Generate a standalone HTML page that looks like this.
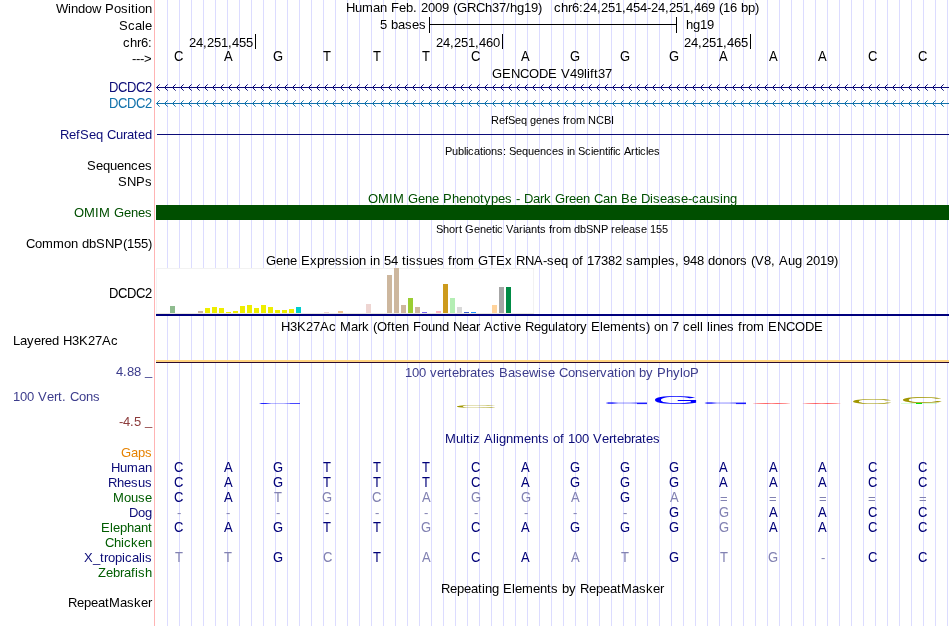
<!DOCTYPE html>
<html><head><meta charset="utf-8"><title>UCSC Genome Browser</title>
<style>html,body{margin:0;padding:0;background:#fff;}body{width:950px;height:626px;overflow:hidden}svg text{white-space:pre}svg{will-change:transform;transform:translateZ(0)}</style>
</head><body>
<svg width="950" height="626" viewBox="0 0 950 626" font-family='"Liberation Sans", Arial, Helvetica, sans-serif' style="display:block">
<defs><linearGradient id="tg"><stop offset="0" stop-color="#00f" stop-opacity=".15"/><stop offset=".06" stop-color="#00f" stop-opacity=".85"/><stop offset=".16" stop-color="#00f" stop-opacity=".85"/><stop offset=".3" stop-color="#00f" stop-opacity=".28"/><stop offset=".6" stop-color="#00f" stop-opacity=".3"/><stop offset=".78" stop-color="#00f" stop-opacity=".55"/><stop offset="1" stop-color="#00f" stop-opacity=".6"/></linearGradient><linearGradient id="tr"><stop offset="0" stop-color="#f00" stop-opacity=".1"/><stop offset=".12" stop-color="#f00" stop-opacity=".4"/><stop offset=".35" stop-color="#f00" stop-opacity=".6"/><stop offset=".5" stop-color="#f00" stop-opacity=".42"/><stop offset=".65" stop-color="#f00" stop-opacity=".6"/><stop offset=".88" stop-color="#f00" stop-opacity=".4"/><stop offset="1" stop-color="#f00" stop-opacity=".1"/></linearGradient></defs>
<path d="M167.5 0V626M179.5 0V626M191.5 0V626M203.5 0V626M215.5 0V626M227.5 0V626M239.5 0V626M251.5 0V626M263.5 0V626M275.5 0V626M287.5 0V626M299.5 0V626M311.5 0V626M323.5 0V626M335.5 0V626M347.5 0V626M359.5 0V626M371.5 0V626M383.5 0V626M395.5 0V626M407.5 0V626M419.5 0V626M431.5 0V626M443.5 0V626M455.5 0V626M467.5 0V626M479.5 0V626M491.5 0V626M503.5 0V626M515.5 0V626M527.5 0V626M539.5 0V626M551.5 0V626M563.5 0V626M575.5 0V626M587.5 0V626M599.5 0V626M611.5 0V626M623.5 0V626M635.5 0V626M647.5 0V626M659.5 0V626M671.5 0V626M683.5 0V626M695.5 0V626M707.5 0V626M719.5 0V626M731.5 0V626M743.5 0V626M755.5 0V626M767.5 0V626M779.5 0V626M791.5 0V626M803.5 0V626M815.5 0V626M827.5 0V626M839.5 0V626M851.5 0V626M863.5 0V626M875.5 0V626M887.5 0V626M899.5 0V626M911.5 0V626M923.5 0V626M935.5 0V626M947.5 0V626" stroke="#dcdcff" stroke-width="1" fill="none"/>
<rect x="154" y="0" width="1" height="626" fill="#ffb4b4"/>
<text x="56 68 71 78 85 92 101 105 114 121 128 131 135 138 145" y="12.5" font-size="13" fill="#000">Window Position</text>
<text x="346 355 362 373 380 387 391 399 406 413 417 421 428 435 442 449 453 457 467 476 485 492 499 506 510 517 524 531 538 542 546 550 554 561 568 572 579 583 590 597 601 608 615 622 626 633 640 647 651 658 665 669 676 683 690 694 701 708 715 719 723 730 737 741 748 755" y="11.5" font-size="13" fill="#000" xml:space="preserve">Human Feb. 2009 (GRCh37/hg19)   chr6:24,251,454-24,251,469 (16 bp)</text>
<text x="119 128 135 142 145" y="29.5" font-size="13" fill="#000">Scale</text>
<text x="380 387 391 398 405 412 419" y="28.5" font-size="13" fill="#000">5 bases</text>
<text x="686 693 700 707" y="28.5" font-size="13" fill="#000">hg19</text>
<rect x="429" y="17" width="1" height="16" fill="#000"/>
<rect x="676" y="17" width="1" height="16" fill="#000"/>
<rect x="429" y="24" width="248" height="1" fill="#000"/>
<text x="123 130 137 141 148" y="46.5" font-size="13" fill="#000">chr6:</text>
<rect x="255" y="34" width="1" height="15" fill="#000"/>
<text x="189 196 203 207 214 221 228 232 239 246" y="46.5" font-size="13" fill="#000">24,251,455</text>
<rect x="502" y="34" width="1" height="15" fill="#000"/>
<text x="436 443 450 454 461 468 475 479 486 493" y="46.5" font-size="13" fill="#000">24,251,460</text>
<rect x="750" y="34" width="1" height="15" fill="#000"/>
<text x="684 691 698 702 709 716 723 727 734 741" y="46.5" font-size="13" fill="#000">24,251,465</text>
<text x="132 136 140 144" y="63" font-size="13" fill="#000">---&gt;</text>
<text x="174" y="0" transform="translate(0 61) scale(1 1.06)" font-size="13" fill="#000">C</text>
<text x="224" y="0" transform="translate(0 61) scale(1 1.06)" font-size="13" fill="#000">A</text>
<text x="273" y="0" transform="translate(0 61) scale(1 1.06)" font-size="13" fill="#000">G</text>
<text x="323" y="0" transform="translate(0 61) scale(1 1.06)" font-size="13" fill="#000">T</text>
<text x="373" y="0" transform="translate(0 61) scale(1 1.06)" font-size="13" fill="#000">T</text>
<text x="422" y="0" transform="translate(0 61) scale(1 1.06)" font-size="13" fill="#000">T</text>
<text x="471" y="0" transform="translate(0 61) scale(1 1.06)" font-size="13" fill="#000">C</text>
<text x="521" y="0" transform="translate(0 61) scale(1 1.06)" font-size="13" fill="#000">A</text>
<text x="570" y="0" transform="translate(0 61) scale(1 1.06)" font-size="13" fill="#000">G</text>
<text x="620" y="0" transform="translate(0 61) scale(1 1.06)" font-size="13" fill="#000">G</text>
<text x="669" y="0" transform="translate(0 61) scale(1 1.06)" font-size="13" fill="#000">G</text>
<text x="719" y="0" transform="translate(0 61) scale(1 1.06)" font-size="13" fill="#000">A</text>
<text x="769" y="0" transform="translate(0 61) scale(1 1.06)" font-size="13" fill="#000">A</text>
<text x="818" y="0" transform="translate(0 61) scale(1 1.06)" font-size="13" fill="#000">A</text>
<text x="868" y="0" transform="translate(0 61) scale(1 1.06)" font-size="13" fill="#000">C</text>
<text x="918" y="0" transform="translate(0 61) scale(1 1.06)" font-size="13" fill="#000">C</text>
<text x="492 502 511 520 529 539 548 557 561 570 577 584 587 590 594 598 605" y="77.5" font-size="13" fill="#000">GENCODE V49lift37</text>
<text x="109 118 127 136 145" y="0" transform="translate(0 92) scale(1 1.06)" font-size="13" fill="#0c0c78">DCDC2</text>
<path d="M156.6 87.5H949" stroke="#0c0c78" stroke-width="1" fill="none"/>
<path d="M159.65 84.35L156.5 87.5L159.65 90.65M167.65 84.35L164.5 87.5L167.65 90.65M175.65 84.35L172.5 87.5L175.65 90.65M183.65 84.35L180.5 87.5L183.65 90.65M191.65 84.35L188.5 87.5L191.65 90.65M199.65 84.35L196.5 87.5L199.65 90.65M207.65 84.35L204.5 87.5L207.65 90.65M215.65 84.35L212.5 87.5L215.65 90.65M223.65 84.35L220.5 87.5L223.65 90.65M231.65 84.35L228.5 87.5L231.65 90.65M239.65 84.35L236.5 87.5L239.65 90.65M247.65 84.35L244.5 87.5L247.65 90.65M255.65 84.35L252.5 87.5L255.65 90.65M263.65 84.35L260.5 87.5L263.65 90.65M271.65 84.35L268.5 87.5L271.65 90.65M279.65 84.35L276.5 87.5L279.65 90.65M287.65 84.35L284.5 87.5L287.65 90.65M295.65 84.35L292.5 87.5L295.65 90.65M303.65 84.35L300.5 87.5L303.65 90.65M311.65 84.35L308.5 87.5L311.65 90.65M319.65 84.35L316.5 87.5L319.65 90.65M327.65 84.35L324.5 87.5L327.65 90.65M335.65 84.35L332.5 87.5L335.65 90.65M343.65 84.35L340.5 87.5L343.65 90.65M351.65 84.35L348.5 87.5L351.65 90.65M359.65 84.35L356.5 87.5L359.65 90.65M367.65 84.35L364.5 87.5L367.65 90.65M375.65 84.35L372.5 87.5L375.65 90.65M383.65 84.35L380.5 87.5L383.65 90.65M391.65 84.35L388.5 87.5L391.65 90.65M399.65 84.35L396.5 87.5L399.65 90.65M407.65 84.35L404.5 87.5L407.65 90.65M415.65 84.35L412.5 87.5L415.65 90.65M423.65 84.35L420.5 87.5L423.65 90.65M431.65 84.35L428.5 87.5L431.65 90.65M439.65 84.35L436.5 87.5L439.65 90.65M447.65 84.35L444.5 87.5L447.65 90.65M455.65 84.35L452.5 87.5L455.65 90.65M463.65 84.35L460.5 87.5L463.65 90.65M471.65 84.35L468.5 87.5L471.65 90.65M479.65 84.35L476.5 87.5L479.65 90.65M487.65 84.35L484.5 87.5L487.65 90.65M495.65 84.35L492.5 87.5L495.65 90.65M503.65 84.35L500.5 87.5L503.65 90.65M511.65 84.35L508.5 87.5L511.65 90.65M519.65 84.35L516.5 87.5L519.65 90.65M527.65 84.35L524.5 87.5L527.65 90.65M535.65 84.35L532.5 87.5L535.65 90.65M543.65 84.35L540.5 87.5L543.65 90.65M551.65 84.35L548.5 87.5L551.65 90.65M559.65 84.35L556.5 87.5L559.65 90.65M567.65 84.35L564.5 87.5L567.65 90.65M575.65 84.35L572.5 87.5L575.65 90.65M583.65 84.35L580.5 87.5L583.65 90.65M591.65 84.35L588.5 87.5L591.65 90.65M599.65 84.35L596.5 87.5L599.65 90.65M607.65 84.35L604.5 87.5L607.65 90.65M615.65 84.35L612.5 87.5L615.65 90.65M623.65 84.35L620.5 87.5L623.65 90.65M631.65 84.35L628.5 87.5L631.65 90.65M639.65 84.35L636.5 87.5L639.65 90.65M647.65 84.35L644.5 87.5L647.65 90.65M655.65 84.35L652.5 87.5L655.65 90.65M663.65 84.35L660.5 87.5L663.65 90.65M671.65 84.35L668.5 87.5L671.65 90.65M679.65 84.35L676.5 87.5L679.65 90.65M687.65 84.35L684.5 87.5L687.65 90.65M695.65 84.35L692.5 87.5L695.65 90.65M703.65 84.35L700.5 87.5L703.65 90.65M711.65 84.35L708.5 87.5L711.65 90.65M719.65 84.35L716.5 87.5L719.65 90.65M727.65 84.35L724.5 87.5L727.65 90.65M735.65 84.35L732.5 87.5L735.65 90.65M743.65 84.35L740.5 87.5L743.65 90.65M751.65 84.35L748.5 87.5L751.65 90.65M759.65 84.35L756.5 87.5L759.65 90.65M767.65 84.35L764.5 87.5L767.65 90.65M775.65 84.35L772.5 87.5L775.65 90.65M783.65 84.35L780.5 87.5L783.65 90.65M791.65 84.35L788.5 87.5L791.65 90.65M799.65 84.35L796.5 87.5L799.65 90.65M807.65 84.35L804.5 87.5L807.65 90.65M815.65 84.35L812.5 87.5L815.65 90.65M823.65 84.35L820.5 87.5L823.65 90.65M831.65 84.35L828.5 87.5L831.65 90.65M839.65 84.35L836.5 87.5L839.65 90.65M847.65 84.35L844.5 87.5L847.65 90.65M855.65 84.35L852.5 87.5L855.65 90.65M863.65 84.35L860.5 87.5L863.65 90.65M871.65 84.35L868.5 87.5L871.65 90.65M879.65 84.35L876.5 87.5L879.65 90.65M887.65 84.35L884.5 87.5L887.65 90.65M895.65 84.35L892.5 87.5L895.65 90.65M903.65 84.35L900.5 87.5L903.65 90.65M911.65 84.35L908.5 87.5L911.65 90.65M919.65 84.35L916.5 87.5L919.65 90.65M927.65 84.35L924.5 87.5L927.65 90.65M935.65 84.35L932.5 87.5L935.65 90.65M943.65 84.35L940.5 87.5L943.65 90.65" stroke="#0c0c78" stroke-width="1" stroke-linejoin="bevel" fill="none"/>
<text x="109 118 127 136 145" y="0" transform="translate(0 108) scale(1 1.06)" font-size="13" fill="#1272ab">DCDC2</text>
<path d="M156.6 103.5H949" stroke="#1272ab" stroke-width="1" fill="none"/>
<path d="M159.65 100.35L156.5 103.5L159.65 106.65M167.65 100.35L164.5 103.5L167.65 106.65M175.65 100.35L172.5 103.5L175.65 106.65M183.65 100.35L180.5 103.5L183.65 106.65M191.65 100.35L188.5 103.5L191.65 106.65M199.65 100.35L196.5 103.5L199.65 106.65M207.65 100.35L204.5 103.5L207.65 106.65M215.65 100.35L212.5 103.5L215.65 106.65M223.65 100.35L220.5 103.5L223.65 106.65M231.65 100.35L228.5 103.5L231.65 106.65M239.65 100.35L236.5 103.5L239.65 106.65M247.65 100.35L244.5 103.5L247.65 106.65M255.65 100.35L252.5 103.5L255.65 106.65M263.65 100.35L260.5 103.5L263.65 106.65M271.65 100.35L268.5 103.5L271.65 106.65M279.65 100.35L276.5 103.5L279.65 106.65M287.65 100.35L284.5 103.5L287.65 106.65M295.65 100.35L292.5 103.5L295.65 106.65M303.65 100.35L300.5 103.5L303.65 106.65M311.65 100.35L308.5 103.5L311.65 106.65M319.65 100.35L316.5 103.5L319.65 106.65M327.65 100.35L324.5 103.5L327.65 106.65M335.65 100.35L332.5 103.5L335.65 106.65M343.65 100.35L340.5 103.5L343.65 106.65M351.65 100.35L348.5 103.5L351.65 106.65M359.65 100.35L356.5 103.5L359.65 106.65M367.65 100.35L364.5 103.5L367.65 106.65M375.65 100.35L372.5 103.5L375.65 106.65M383.65 100.35L380.5 103.5L383.65 106.65M391.65 100.35L388.5 103.5L391.65 106.65M399.65 100.35L396.5 103.5L399.65 106.65M407.65 100.35L404.5 103.5L407.65 106.65M415.65 100.35L412.5 103.5L415.65 106.65M423.65 100.35L420.5 103.5L423.65 106.65M431.65 100.35L428.5 103.5L431.65 106.65M439.65 100.35L436.5 103.5L439.65 106.65M447.65 100.35L444.5 103.5L447.65 106.65M455.65 100.35L452.5 103.5L455.65 106.65M463.65 100.35L460.5 103.5L463.65 106.65M471.65 100.35L468.5 103.5L471.65 106.65M479.65 100.35L476.5 103.5L479.65 106.65M487.65 100.35L484.5 103.5L487.65 106.65M495.65 100.35L492.5 103.5L495.65 106.65M503.65 100.35L500.5 103.5L503.65 106.65M511.65 100.35L508.5 103.5L511.65 106.65M519.65 100.35L516.5 103.5L519.65 106.65M527.65 100.35L524.5 103.5L527.65 106.65M535.65 100.35L532.5 103.5L535.65 106.65M543.65 100.35L540.5 103.5L543.65 106.65M551.65 100.35L548.5 103.5L551.65 106.65M559.65 100.35L556.5 103.5L559.65 106.65M567.65 100.35L564.5 103.5L567.65 106.65M575.65 100.35L572.5 103.5L575.65 106.65M583.65 100.35L580.5 103.5L583.65 106.65M591.65 100.35L588.5 103.5L591.65 106.65M599.65 100.35L596.5 103.5L599.65 106.65M607.65 100.35L604.5 103.5L607.65 106.65M615.65 100.35L612.5 103.5L615.65 106.65M623.65 100.35L620.5 103.5L623.65 106.65M631.65 100.35L628.5 103.5L631.65 106.65M639.65 100.35L636.5 103.5L639.65 106.65M647.65 100.35L644.5 103.5L647.65 106.65M655.65 100.35L652.5 103.5L655.65 106.65M663.65 100.35L660.5 103.5L663.65 106.65M671.65 100.35L668.5 103.5L671.65 106.65M679.65 100.35L676.5 103.5L679.65 106.65M687.65 100.35L684.5 103.5L687.65 106.65M695.65 100.35L692.5 103.5L695.65 106.65M703.65 100.35L700.5 103.5L703.65 106.65M711.65 100.35L708.5 103.5L711.65 106.65M719.65 100.35L716.5 103.5L719.65 106.65M727.65 100.35L724.5 103.5L727.65 106.65M735.65 100.35L732.5 103.5L735.65 106.65M743.65 100.35L740.5 103.5L743.65 106.65M751.65 100.35L748.5 103.5L751.65 106.65M759.65 100.35L756.5 103.5L759.65 106.65M767.65 100.35L764.5 103.5L767.65 106.65M775.65 100.35L772.5 103.5L775.65 106.65M783.65 100.35L780.5 103.5L783.65 106.65M791.65 100.35L788.5 103.5L791.65 106.65M799.65 100.35L796.5 103.5L799.65 106.65M807.65 100.35L804.5 103.5L807.65 106.65M815.65 100.35L812.5 103.5L815.65 106.65M823.65 100.35L820.5 103.5L823.65 106.65M831.65 100.35L828.5 103.5L831.65 106.65M839.65 100.35L836.5 103.5L839.65 106.65M847.65 100.35L844.5 103.5L847.65 106.65M855.65 100.35L852.5 103.5L855.65 106.65M863.65 100.35L860.5 103.5L863.65 106.65M871.65 100.35L868.5 103.5L871.65 106.65M879.65 100.35L876.5 103.5L879.65 106.65M887.65 100.35L884.5 103.5L887.65 106.65M895.65 100.35L892.5 103.5L895.65 106.65M903.65 100.35L900.5 103.5L903.65 106.65M911.65 100.35L908.5 103.5L911.65 106.65M919.65 100.35L916.5 103.5L919.65 106.65M927.65 100.35L924.5 103.5L927.65 106.65M935.65 100.35L932.5 103.5L935.65 106.65M943.65 100.35L940.5 103.5L943.65 106.65" stroke="#1272ab" stroke-width="1" stroke-linejoin="bevel" fill="none"/>
<text x="491 499 505 508 515 521 527 530 536 542 548 554 560 563 566 570 576 585 588 596 604 611" y="123.5" font-size="11" fill="#000">RefSeq genes from NCBI</text>
<text x="60 69 76 80 89 96 103 107 116 123 127 134 138 145" y="138.5" font-size="13" fill="#0c0c78">RefSeq Curated</text>
<rect x="157" y="134" width="792" height="1" fill="#0c0c78"/>
<text x="445 452 458 464 466 468 474 480 483 485 491 497 503 506 509 516 522 528 534 540 546 552 558 564 567 569 575 578 585 591 593 599 605 608 610 613 615 621 624 631 635 638 640 646 648 654" y="154.5" font-size="11" fill="#000">Publications: Sequences in Scientific Articles</text>
<text x="87 96 103 110 117 124 131 138 145" y="169.5" font-size="13" fill="#000">Sequences</text>
<text x="118 127 136 145" y="185.5" font-size="13" fill="#000">SNPs</text>
<text x="368 378 389 393 404 408 418 425 432 439 443 452 459 466 473 480 484 491 498 505 512 516 520 524 533 540 544 551 555 565 569 576 583 590 594 603 610 617 621 630 637 641 650 653 660 667 674 681 688 692 699 706 713 720 723 730" y="202.5" font-size="13" fill="#004f00">OMIM Gene Phenotypes - Dark Green Can Be Disease-causing</text>
<text x="74 84 95 99 110 114 124 131 138 145" y="217" font-size="13" fill="#004f00">OMIM Genes</text>
<rect x="156" y="205" width="793" height="15" fill="#004f00"/>
<text x="436 443 449 455 459 462 465 474 480 486 492 495 497 503 506 513 519 523 525 531 537 540 546 549 552 556 562 571 574 580 586 593 601 608 611 615 621 623 629 635 641 647 650 656 662" y="232.5" font-size="11" fill="#000">Short Genetic Variants from dbSNP release 155</text>
<text x="26 35 42 53 64 71 78 82 89 96 105 114 123 127 134 141 148" y="247.5" font-size="13" fill="#000">Common dbSNP(155)</text>
<text x="266 276 283 290 297 301 310 317 324 328 335 342 349 352 359 366 370 373 380 384 391 398 402 406 409 416 423 430 437 444 448 452 456 463 474 478 488 496 505 512 516 525 534 543 547 554 561 568 572 579 583 587 594 601 608 615 622 626 633 640 651 658 661 668 675 679 683 690 697 704 708 715 722 729 736 740 747 751 755 764 771 775 779 788 795 802 806 813 820 827 834" y="264.5" font-size="13" fill="#000">Gene Expression in 54 tissues from GTEx RNA-seq of 17382 samples, 948 donors (V8, Aug 2019)</text>
<text x="109 118 127 136 145" y="0" transform="translate(0 297.5) scale(1 1.06)" font-size="13" fill="#000">DCDC2</text>
<rect x="156" y="268" width="378" height="46" fill="#fff"/>
<rect x="156" y="268" width="378" height="1" fill="#f2f2f2"/>
<rect x="533" y="268" width="1" height="46" fill="#f2f2f2"/>
<rect x="156" y="268" width="1" height="46" fill="#f4f4f4"/>
<rect x="156" y="313" width="378" height="1" fill="#e9e7df"/>
<rect x="170" y="306" width="5" height="7" fill="#8fbc8f"/>
<rect x="198" y="311" width="5" height="2" fill="#cdb79e"/>
<rect x="205" y="308" width="5" height="5" fill="#eeee00"/>
<rect x="212" y="307" width="5" height="6" fill="#eeee00"/>
<rect x="219" y="308" width="5" height="5" fill="#eeee00"/>
<rect x="226" y="312" width="5" height="1" fill="#eeee00"/>
<rect x="233" y="311" width="5" height="2" fill="#eeee00"/>
<rect x="240" y="306" width="5" height="7" fill="#eeee00"/>
<rect x="247" y="305" width="5" height="8" fill="#eeee00"/>
<rect x="254" y="308" width="5" height="5" fill="#eeee00"/>
<rect x="261" y="305" width="5" height="8" fill="#eeee00"/>
<rect x="268" y="307" width="5" height="6" fill="#eeee00"/>
<rect x="275" y="310" width="5" height="3" fill="#eeee00"/>
<rect x="282" y="310" width="5" height="3" fill="#eeee00"/>
<rect x="289" y="309" width="5" height="4" fill="#eeee00"/>
<rect x="296" y="307" width="5" height="6" fill="#00cdcd"/>
<rect x="324" y="312" width="5" height="1" fill="#eed5d2"/>
<rect x="338" y="311" width="5" height="2" fill="#eec591"/>
<rect x="366" y="304" width="5" height="9" fill="#eed5d2"/>
<rect x="387" y="275" width="5" height="38" fill="#cdb79e"/>
<rect x="394" y="268" width="5" height="45" fill="#cdb79e"/>
<rect x="401" y="305" width="5" height="8" fill="#cdb79e"/>
<rect x="408" y="298" width="5" height="15" fill="#9acd32"/>
<rect x="415" y="307" width="5" height="6" fill="#cdb79e"/>
<rect x="422" y="312" width="5" height="1" fill="#7a67ee"/>
<rect x="436" y="311" width="5" height="2" fill="#ffb6c1"/>
<rect x="443" y="284" width="5" height="29" fill="#cd9b1d"/>
<rect x="450" y="298" width="5" height="15" fill="#b4eeb4"/>
<rect x="457" y="307" width="5" height="6" fill="#d9d9d9"/>
<rect x="464" y="312" width="5" height="1" fill="#3a5fcd"/>
<rect x="471" y="312" width="5" height="1" fill="#1e90ff"/>
<rect x="492" y="305" width="5" height="8" fill="#ffd39b"/>
<rect x="499" y="287" width="5" height="26" fill="#a6a6a6"/>
<rect x="506" y="287" width="5" height="26" fill="#008b45"/>
<rect x="156" y="314" width="793" height="2" fill="#00007d"/>
<text x="281 290 297 306 313 320 329 336 340 351 358 362 369 373 377 387 391 395 402 409 413 421 428 435 442 449 453 462 469 476 480 484 493 500 504 507 514 521 525 534 541 548 555 558 565 569 576 580 587 591 600 603 610 621 628 635 639 646 650 654 661 668 672 679 683 690 697 700 703 707 710 713 720 727 734 738 742 746 753 764 768 777 786 795 805 814" y="330.5" font-size="13" fill="#000">H3K27Ac Mark (Often Found Near Active Regulatory Elements) on 7 cell lines from ENCODE</text>
<text x="13 20 27 34 41 45 52 59 63 72 79 88 95 102 111" y="344.5" font-size="13" fill="#000">Layered H3K27Ac</text>
<rect x="156" y="360" width="793" height="2" fill="#ffd37f"/>
<rect x="156" y="362" width="793" height="1" fill="#2d0a2d"/>
<text x="405 412 419 426 430 437 444 448 452 459 466 470 477 481 488 495 499 508 515 522 529 538 541 548 555 559 568 575 582 589 596 600 607 614 618 621 628 635 639 646 653 657 666 673 680 683 690" y="376.5" font-size="13" fill="#3c3c8c">100 vertebrates Basewise Conservation by PhyloP</text>
<text x="116 123 127 134 141 145" y="375.5" font-size="13" fill="#3c3c8c" dy="0 0 0 0 0 -1">4.88 _</text>
<text x="13 20 27 34 38 47 54 58 62 66 70 79 86 93" y="400.5" font-size="13" fill="#3c3c8c">100 Vert. Cons</text>
<text x="119 123 130 134 141 145" y="425.5" font-size="13" fill="#8c3c3c" dy="0 0 0 0 0 -1">-4.5 _</text>
<rect x="259.2" y="403" width="40.7" height="1" fill="url(#tg)"/>
<rect x="290" y="403" width="10" height="1" fill="#0000ff" fill-opacity="0.35"/>
<text transform="matrix(6.1582 0 0 0.3672 453.67 407.96)" font-size="10" fill="#a09600">C</text>
<rect x="606" y="402.3" width="41" height="1.5" fill="url(#tg)"/>
<rect x="637" y="403" width="10" height="1.1" fill="#0000ff" fill-opacity="0.8"/>
<text transform="matrix(6.3110 0 0 1.0311 651.63 403.80)" font-size="10" fill="#0000ff">G</text>
<rect x="704.7" y="402.3" width="41.3" height="1.5" fill="url(#tg)"/>
<rect x="736" y="403" width="10" height="1.1" fill="#0000ff" fill-opacity="0.8"/>
<rect x="753" y="403" width="37" height="1" fill="url(#tr)"/>
<rect x="802.6" y="403" width="38" height="1" fill="url(#tr)"/>
<text transform="matrix(6.0635 0 0 0.8051 849.92 404.12)" font-size="10" fill="#a09600">C</text>
<text transform="matrix(6.1582 0 0 0.9463 899.87 403.01)" font-size="10" fill="#a09600">C</text>
<rect x="916" y="403" width="6" height="1" fill="#00e000"/>
<rect x="901" y="403" width="36" height="1" fill="#00ff00" fill-opacity="0.15"/>
<text x="445 456 463 466 470 473 480 484 493 496 499 506 513 524 531 538 542 549 553 560 564 568 575 582 589 593 602 609 613 617 624 631 635 642 646 653" y="442.5" font-size="13" fill="#0c0c78">Multiz Alignments of 100 Vertebrates</text>
<text x="121 131 138 145" y="456.5" font-size="13" fill="#e68200">Gaps</text>
<text x="111 120 127 138 145" y="471.5" font-size="13" fill="#0c0c78">Human</text>
<text x="174" y="0" transform="translate(0 471.5) scale(1 1.06)" font-size="13" fill="#000078">C</text>
<text x="224" y="0" transform="translate(0 471.5) scale(1 1.06)" font-size="13" fill="#000078">A</text>
<text x="273" y="0" transform="translate(0 471.5) scale(1 1.06)" font-size="13" fill="#000078">G</text>
<text x="323" y="0" transform="translate(0 471.5) scale(1 1.06)" font-size="13" fill="#000078">T</text>
<text x="373" y="0" transform="translate(0 471.5) scale(1 1.06)" font-size="13" fill="#000078">T</text>
<text x="422" y="0" transform="translate(0 471.5) scale(1 1.06)" font-size="13" fill="#000078">T</text>
<text x="471" y="0" transform="translate(0 471.5) scale(1 1.06)" font-size="13" fill="#000078">C</text>
<text x="521" y="0" transform="translate(0 471.5) scale(1 1.06)" font-size="13" fill="#000078">A</text>
<text x="570" y="0" transform="translate(0 471.5) scale(1 1.06)" font-size="13" fill="#000078">G</text>
<text x="620" y="0" transform="translate(0 471.5) scale(1 1.06)" font-size="13" fill="#000078">G</text>
<text x="669" y="0" transform="translate(0 471.5) scale(1 1.06)" font-size="13" fill="#000078">G</text>
<text x="719" y="0" transform="translate(0 471.5) scale(1 1.06)" font-size="13" fill="#000078">A</text>
<text x="769" y="0" transform="translate(0 471.5) scale(1 1.06)" font-size="13" fill="#000078">A</text>
<text x="818" y="0" transform="translate(0 471.5) scale(1 1.06)" font-size="13" fill="#000078">A</text>
<text x="868" y="0" transform="translate(0 471.5) scale(1 1.06)" font-size="13" fill="#000078">C</text>
<text x="918" y="0" transform="translate(0 471.5) scale(1 1.06)" font-size="13" fill="#000078">C</text>
<text x="108 117 124 131 138 145" y="486.5" font-size="13" fill="#0c0c78">Rhesus</text>
<text x="174" y="0" transform="translate(0 486.5) scale(1 1.06)" font-size="13" fill="#000078">C</text>
<text x="224" y="0" transform="translate(0 486.5) scale(1 1.06)" font-size="13" fill="#000078">A</text>
<text x="273" y="0" transform="translate(0 486.5) scale(1 1.06)" font-size="13" fill="#000078">G</text>
<text x="323" y="0" transform="translate(0 486.5) scale(1 1.06)" font-size="13" fill="#000078">T</text>
<text x="373" y="0" transform="translate(0 486.5) scale(1 1.06)" font-size="13" fill="#000078">T</text>
<text x="422" y="0" transform="translate(0 486.5) scale(1 1.06)" font-size="13" fill="#000078">T</text>
<text x="471" y="0" transform="translate(0 486.5) scale(1 1.06)" font-size="13" fill="#000078">C</text>
<text x="521" y="0" transform="translate(0 486.5) scale(1 1.06)" font-size="13" fill="#000078">A</text>
<text x="570" y="0" transform="translate(0 486.5) scale(1 1.06)" font-size="13" fill="#000078">G</text>
<text x="620" y="0" transform="translate(0 486.5) scale(1 1.06)" font-size="13" fill="#000078">G</text>
<text x="669" y="0" transform="translate(0 486.5) scale(1 1.06)" font-size="13" fill="#000078">G</text>
<text x="719" y="0" transform="translate(0 486.5) scale(1 1.06)" font-size="13" fill="#000078">A</text>
<text x="769" y="0" transform="translate(0 486.5) scale(1 1.06)" font-size="13" fill="#000078">A</text>
<text x="818" y="0" transform="translate(0 486.5) scale(1 1.06)" font-size="13" fill="#000078">A</text>
<text x="868" y="0" transform="translate(0 486.5) scale(1 1.06)" font-size="13" fill="#000078">C</text>
<text x="918" y="0" transform="translate(0 486.5) scale(1 1.06)" font-size="13" fill="#000078">C</text>
<text x="113 124 131 138 145" y="501.5" font-size="13" fill="#005c00">Mouse</text>
<text x="174" y="0" transform="translate(0 501.5) scale(1 1.06)" font-size="13" fill="#000078">C</text>
<text x="224" y="0" transform="translate(0 501.5) scale(1 1.06)" font-size="13" fill="#000078">A</text>
<text x="274" y="0" transform="translate(0 501.5) scale(1 1.06)" font-size="13" fill="#8282b2">T</text>
<text x="322" y="0" transform="translate(0 501.5) scale(1 1.06)" font-size="13" fill="#8282b2">G</text>
<text x="372" y="0" transform="translate(0 501.5) scale(1 1.06)" font-size="13" fill="#8282b2">C</text>
<text x="422" y="0" transform="translate(0 501.5) scale(1 1.06)" font-size="13" fill="#8282b2">A</text>
<text x="471" y="0" transform="translate(0 501.5) scale(1 1.06)" font-size="13" fill="#8282b2">G</text>
<text x="521" y="0" transform="translate(0 501.5) scale(1 1.06)" font-size="13" fill="#8282b2">G</text>
<text x="571" y="0" transform="translate(0 501.5) scale(1 1.06)" font-size="13" fill="#8282b2">A</text>
<text x="620" y="0" transform="translate(0 501.5) scale(1 1.06)" font-size="13" fill="#000078">G</text>
<text x="670" y="0" transform="translate(0 501.5) scale(1 1.06)" font-size="13" fill="#8282b2">A</text>
<text x="720" y="502.5" font-size="13" fill="#8282b2">=</text>
<text x="769" y="502.5" font-size="13" fill="#8282b2">=</text>
<text x="819" y="502.5" font-size="13" fill="#8282b2">=</text>
<text x="868" y="502.5" font-size="13" fill="#8282b2">=</text>
<text x="919" y="502.5" font-size="13" fill="#8282b2">=</text>
<text x="129 138 145" y="516.5" font-size="13" fill="#0c0c78">Dog</text>
<text x="177" y="516.5" font-size="13" fill="#8282b2">-</text>
<text x="226" y="516.5" font-size="13" fill="#8282b2">-</text>
<text x="276" y="516.5" font-size="13" fill="#8282b2">-</text>
<text x="325" y="516.5" font-size="13" fill="#8282b2">-</text>
<text x="375" y="516.5" font-size="13" fill="#8282b2">-</text>
<text x="424" y="516.5" font-size="13" fill="#8282b2">-</text>
<text x="474" y="516.5" font-size="13" fill="#8282b2">-</text>
<text x="524" y="516.5" font-size="13" fill="#8282b2">-</text>
<text x="573" y="516.5" font-size="13" fill="#8282b2">-</text>
<text x="623" y="516.5" font-size="13" fill="#8282b2">-</text>
<text x="669" y="0" transform="translate(0 516.5) scale(1 1.06)" font-size="13" fill="#000078">G</text>
<text x="719" y="0" transform="translate(0 516.5) scale(1 1.06)" font-size="13" fill="#8282b2">G</text>
<text x="769" y="0" transform="translate(0 516.5) scale(1 1.06)" font-size="13" fill="#000078">A</text>
<text x="818" y="0" transform="translate(0 516.5) scale(1 1.06)" font-size="13" fill="#000078">A</text>
<text x="868" y="0" transform="translate(0 516.5) scale(1 1.06)" font-size="13" fill="#000078">C</text>
<text x="918" y="0" transform="translate(0 516.5) scale(1 1.06)" font-size="13" fill="#000078">C</text>
<text x="101 110 113 120 127 134 141 148" y="531.5" font-size="13" fill="#005c00">Elephant</text>
<text x="174" y="0" transform="translate(0 531.5) scale(1 1.06)" font-size="13" fill="#000078">C</text>
<text x="224" y="0" transform="translate(0 531.5) scale(1 1.06)" font-size="13" fill="#000078">A</text>
<text x="273" y="0" transform="translate(0 531.5) scale(1 1.06)" font-size="13" fill="#000078">G</text>
<text x="323" y="0" transform="translate(0 531.5) scale(1 1.06)" font-size="13" fill="#000078">T</text>
<text x="373" y="0" transform="translate(0 531.5) scale(1 1.06)" font-size="13" fill="#000078">T</text>
<text x="421" y="0" transform="translate(0 531.5) scale(1 1.06)" font-size="13" fill="#8282b2">G</text>
<text x="471" y="0" transform="translate(0 531.5) scale(1 1.06)" font-size="13" fill="#000078">C</text>
<text x="521" y="0" transform="translate(0 531.5) scale(1 1.06)" font-size="13" fill="#000078">A</text>
<text x="570" y="0" transform="translate(0 531.5) scale(1 1.06)" font-size="13" fill="#000078">G</text>
<text x="620" y="0" transform="translate(0 531.5) scale(1 1.06)" font-size="13" fill="#000078">G</text>
<text x="669" y="0" transform="translate(0 531.5) scale(1 1.06)" font-size="13" fill="#000078">G</text>
<text x="719" y="0" transform="translate(0 531.5) scale(1 1.06)" font-size="13" fill="#8282b2">G</text>
<text x="769" y="0" transform="translate(0 531.5) scale(1 1.06)" font-size="13" fill="#000078">A</text>
<text x="818" y="0" transform="translate(0 531.5) scale(1 1.06)" font-size="13" fill="#000078">A</text>
<text x="868" y="0" transform="translate(0 531.5) scale(1 1.06)" font-size="13" fill="#000078">C</text>
<text x="918" y="0" transform="translate(0 531.5) scale(1 1.06)" font-size="13" fill="#000078">C</text>
<text x="105 114 121 124 131 138 145" y="546.5" font-size="13" fill="#005c00">Chicken</text>
<text x="84 93 100 104 108 115 122 125 132 139 142 145" y="561.5" font-size="13" fill="#0c0c78">X_tropicalis</text>
<text x="175" y="0" transform="translate(0 561.5) scale(1 1.06)" font-size="13" fill="#8282b2">T</text>
<text x="224" y="0" transform="translate(0 561.5) scale(1 1.06)" font-size="13" fill="#8282b2">T</text>
<text x="273" y="0" transform="translate(0 561.5) scale(1 1.06)" font-size="13" fill="#000078">G</text>
<text x="323" y="0" transform="translate(0 561.5) scale(1 1.06)" font-size="13" fill="#8282b2">C</text>
<text x="373" y="0" transform="translate(0 561.5) scale(1 1.06)" font-size="13" fill="#000078">T</text>
<text x="422" y="0" transform="translate(0 561.5) scale(1 1.06)" font-size="13" fill="#8282b2">A</text>
<text x="471" y="0" transform="translate(0 561.5) scale(1 1.06)" font-size="13" fill="#000078">C</text>
<text x="521" y="0" transform="translate(0 561.5) scale(1 1.06)" font-size="13" fill="#000078">A</text>
<text x="571" y="0" transform="translate(0 561.5) scale(1 1.06)" font-size="13" fill="#8282b2">A</text>
<text x="621" y="0" transform="translate(0 561.5) scale(1 1.06)" font-size="13" fill="#8282b2">T</text>
<text x="669" y="0" transform="translate(0 561.5) scale(1 1.06)" font-size="13" fill="#000078">G</text>
<text x="720" y="0" transform="translate(0 561.5) scale(1 1.06)" font-size="13" fill="#8282b2">T</text>
<text x="768" y="0" transform="translate(0 561.5) scale(1 1.06)" font-size="13" fill="#8282b2">G</text>
<text x="821" y="561.5" font-size="13" fill="#8282b2">-</text>
<text x="868" y="0" transform="translate(0 561.5) scale(1 1.06)" font-size="13" fill="#000078">C</text>
<text x="918" y="0" transform="translate(0 561.5) scale(1 1.06)" font-size="13" fill="#000078">C</text>
<text x="98 106 113 120 124 131 135 138 145" y="576.5" font-size="13" fill="#005c00">Zebrafish</text>
<text x="441 450 457 464 471 478 482 485 492 499 503 512 515 522 533 540 547 551 558 562 569 576 580 589 596 603 610 617 621 632 639 646 653 660" y="592.5" font-size="13" fill="#000">Repeating Elements by RepeatMasker</text>
<text x="68 77 84 91 98 105 109 120 127 134 141 148" y="606.5" font-size="13" fill="#000">RepeatMasker</text>
</svg>
</body></html>
